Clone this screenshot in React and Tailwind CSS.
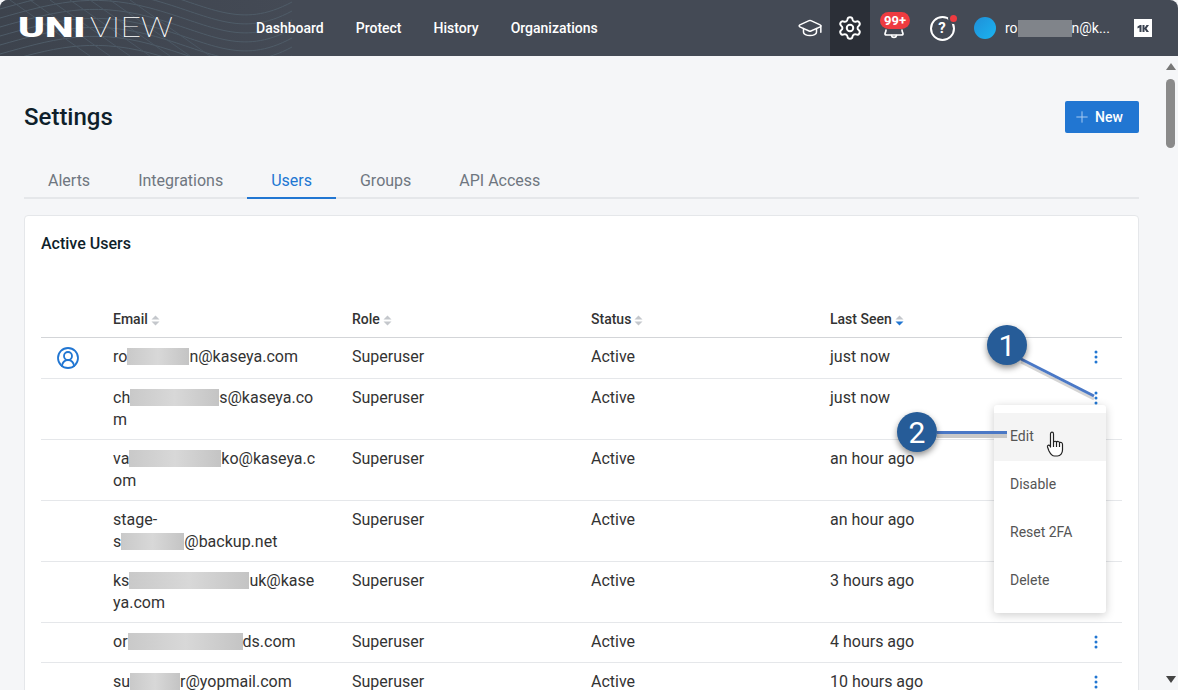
import React from 'react';
import { GraduationCap, Settings, CircleUserRound, Plus } from 'lucide-react';

const Blur = ({ w }) => (
  <span
    className="inline-block h-[17px] align-[-3px] bg-gradient-to-r from-[#c9c9c9] via-[#d8d8d8] to-[#c4c4c4]"
    style={{ width: w }}
  />
);

const users = [
  { lines: [['ro', 62, 'n@kaseya.com']], seen: 'just now', me: true },
  { lines: [['ch', 89, 's@kaseya.co'], ['m']], seen: 'just now' },
  { lines: [['va', 92, 'ko@kaseya.c'], ['om']], seen: 'an hour ago' },
  { lines: [['stage-'], ['s', 63, '@backup.net']], seen: 'an hour ago' },
  { lines: [['ks', 120, 'uk@kase'], ['ya.com']], seen: '3 hours ago' },
  { lines: [['or', 115, 'ds.com']], seen: '4 hours ago' },
  { lines: [['su', 50, 'r@yopmail.com']], seen: '10 hours ago' },
];

const SortIcon = ({ active }) => (
  <svg width="9" height="11" viewBox="0 0 9 11" className="ml-[3px] inline-block">
    <path d="M4.5 0.5 L8.5 4.5 H0.5 Z" fill="#c4c7cc" />
    <path d="M4.5 10.5 L8.5 6.5 H0.5 Z" fill={active ? '#2176d2' : '#c4c7cc'} />
  </svg>
);

const Kebab = () => (
  <svg width="4" height="14" viewBox="0 0 4 14">
    <circle cx="2" cy="2" r="1.5" fill="#2176d2" />
    <circle cx="2" cy="7" r="1.5" fill="#2176d2" />
    <circle cx="2" cy="12" r="1.5" fill="#2176d2" />
  </svg>
);

const HeaderWaves = () => (
  <svg className="absolute left-0 top-0 h-14 w-[292px]" viewBox="0 0 292 56" fill="none" stroke="#4f5c68" strokeWidth="1">
    {[-32, -23, -14, -5, 4, 13, 22, 31].map((d) => (
      <path key={d} d={`M0 ${32 + d} C 50 ${18 + d}, 90 ${6 + d}, 150 ${22 + d} S 240 ${62 + d}, 292 ${34 + d}`} />
    ))}
    {[-40, -30, -20, -10, 0, 10, 20].map((d) => (
      <path key={d} d={`M${90 + d * 2} 0 L${170 + d * 2} 56`} stroke="#4b5763" />
    ))}
  </svg>
);

const BellBottom = () => (
  <svg width="22" height="10" viewBox="0 0 22 10" fill="none" stroke="#fff" strokeWidth="1.7" strokeLinecap="round">
    <path d="M3 1 C3 3 2 3.5 2 5 C2 6 3 6 4 6 H18 C19 6 20 6 20 5 C20 3.5 19 3 19 1" />
    <path d="M8.5 6.5 C9 9 13 9 13.5 6.5" />
  </svg>
);

const KaseyaMark = () => (
  <svg width="18" height="18" viewBox="0 0 18 18" className="bg-white">
    <path d="M3.5 7.5 L6 6 H7.5 V13 H5.5 V8.5 L3.5 9.5 Z" fill="#3a4250" />
    <path d="M8.5 6 H10.5 V9 L12.5 6 H15 L12.5 9.5 L15 13 H12.5 L10.5 10 V13 H8.5 Z" fill="#3a4250" />
  </svg>
);

function App() {
  return (
    <div className="relative flex h-[690px] w-[1178px] flex-col overflow-hidden bg-[#f5f6f8] font-['Roboto',sans-serif] text-[#333]">
      <header className="relative flex h-14 shrink-0 items-center overflow-hidden rounded-t-lg bg-[#444a55] text-white">
        <div className="absolute left-0 top-0 h-14 w-[292px] bg-gradient-to-r from-[#3d434d] to-[#444a55]" />
        <HeaderWaves />
        <div className="relative flex w-[240px] items-center pl-[18px] text-[27px] leading-none">
          <span className="inline-block w-[72px] origin-left scale-x-[1.5] font-black">UNI</span>
          <span className="inline-block origin-left scale-x-[1.32] font-thin">VIEW</span>
        </div>
        <nav className="relative flex pb-px text-sm font-medium">
          <a className="px-4">Dashboard</a>
          <a className="px-4">Protect</a>
          <a className="px-4">History</a>
          <a className="px-4">Organizations</a>
        </nav>
        <div className="relative ml-auto flex h-full items-center">
          <div className="flex h-full w-[40px] items-center justify-center">
            <GraduationCap size={26} strokeWidth={1.4} />
          </div>
          <div className="flex h-full w-[40px] items-center justify-center bg-[#2b2f37]">
            <Settings size={26} strokeWidth={1.8} />
          </div>
          <div className="relative flex h-full w-[48px] items-start justify-center pt-[29px]">
            <BellBottom />
            <span className="absolute left-[10px] top-[12px] rounded-full bg-[#ee3b40] px-[4px] text-[13px] font-bold leading-[17px]">99+</span>
          </div>
          <div className="relative flex h-full w-[48px] items-center justify-center">
            <span className="flex h-[25px] w-[25px] items-center justify-center rounded-full border-2 border-white text-[15px] font-bold leading-none">?</span>
            <span className="absolute left-[30px] top-[13px] h-[11px] w-[11px] rounded-full border-2 border-[#444a55] bg-[#ee3b40]" />
          </div>
          <div className="ml-[8px] h-[22px] w-[22px] rounded-full bg-gradient-to-br from-[#1f8fd8] to-[#1ab4f0]" />
          <div className="ml-[9px] flex w-[105px] items-center text-sm">
            <span>ro</span>
            <span className="h-[17px] w-[56px] bg-[#80848a]" />
            <span>n@k...</span>
          </div>
          <div className="ml-[24px] mr-[26px]">
            <KaseyaMark />
          </div>
        </div>
      </header>

      <div className="flex min-h-0 flex-1">
        <main className="min-w-0 flex-1 px-6 pt-[45px]">
          <div className="flex items-center justify-between">
            <h1 className="text-2xl font-medium leading-8 text-[#0f1f2b]">Settings</h1>
            <button className="flex h-8 w-[74px] items-center gap-1 rounded-[2px] bg-[#2176d2] pb-px pl-2 text-sm font-medium text-white">
              <Plus size={18} strokeWidth={1.3} className="text-[#a9cdf2]" />
              New
            </button>
          </div>

          <div className="mt-[30px] flex h-[36px] border-b-2 border-[#e5e7ea] text-base text-[#6f7680]">
            <a className="px-6 pt-[6px]">Alerts</a>
            <a className="px-6 pt-[6px]">Integrations</a>
            <a className="-mb-[2px] border-b-2 border-[#2176d2] px-6 pt-[6px] text-[#2176d2]">Users</a>
            <a className="px-6 pt-[6px]">Groups</a>
            <a className="px-6 pt-[6px]">API Access</a>
          </div>

          <section className="mt-4 rounded-t border border-[#e5e7ea] bg-white px-4 pt-4">
            <h2 className="text-base font-medium leading-6 text-[#0f1f2b]">Active Users</h2>

            <div className="mt-[33px] grid h-[49px] grid-cols-[60px_239px_239px_239px_239px_65px] items-end border-b border-[#d3d5d8] pb-[8px] text-sm font-medium leading-5">
              <div />
              <div className="px-3">Email<SortIcon /></div>
              <div className="px-3">Role<SortIcon /></div>
              <div className="px-3">Status<SortIcon /></div>
              <div className="px-3">Last Seen<SortIcon active /></div>
              <div />
            </div>

            {users.map((u, i) => (
              <div
                key={i}
                className={
                  i === 0
                    ? 'grid min-h-[39px] grid-cols-[60px_239px_239px_239px_239px_65px] border-b border-[#e5e7ea] py-2 text-base leading-[22px]'
                    : 'grid min-h-10 grid-cols-[60px_239px_239px_239px_239px_65px] border-b border-[#e5e7ea] py-2 text-base leading-[22px]'
                }
              >
                <div className="flex justify-center pr-[6px]">
                  {u.me && <CircleUserRound size={24} strokeWidth={1.8} className="text-[#2176d2]" />}
                </div>
                <div className="px-3">
                  {u.lines.map((l, j) => (
                    <div key={j} className="whitespace-nowrap">
                      {l[0]}
                      {l[1] && <Blur w={l[1]} />}
                      {l[2]}
                    </div>
                  ))}
                </div>
                <div className="px-3">Superuser</div>
                <div className="px-3">Active</div>
                <div className="px-3">{u.seen}</div>
                <div className="flex justify-center pl-[12px] pt-[4px]">
                  <Kebab />
                </div>
              </div>
            ))}
          </section>
        </main>

        <aside className="flex w-[15px] shrink-0 flex-col items-center bg-[#f5f6f8] pt-[7px]">
          <svg width="10" height="7" viewBox="0 0 10 7"><path d="M5 0 L10 7 H0 Z" fill="#777" /></svg>
          <div className="mt-[9px] h-[69px] w-[9px] rounded-full bg-[#8a8a8a]" />
          <svg className="mt-auto mb-[7px]" width="10" height="7" viewBox="0 0 10 7"><path d="M5 7 L10 0 H0 Z" fill="#444" /></svg>
        </aside>
      </div>

      {/* row menu */}
      <div className="absolute left-[994px] top-[405px] w-[112px] rounded-[3px] bg-white py-2 text-sm text-[#555] shadow-[0_2px_10px_rgba(0,0,0,0.2)]">
        <div className="flex h-12 items-center bg-[#f4f4f4] px-4 pb-[2px]">Edit</div>
        <div className="flex h-12 items-center px-4 pb-[2px]">Disable</div>
        <div className="flex h-12 items-center px-4 pb-[2px]">Reset 2FA</div>
        <div className="flex h-12 items-center px-4 pb-[2px]">Delete</div>
      </div>

      {/* hand cursor */}
      <svg className="absolute left-[1046px] top-[431px]" width="19" height="26" viewBox="0 0 18 26" fill="#fff" stroke="#222" strokeWidth="1.2" strokeLinejoin="round">
        <path d="M4 3 C4 0.5 7 0.5 7 3 V11 C8 10 9.5 10 10 11 C11 10 12.5 10.5 13 11.5 C14 11 16 11.5 16 13.5 V19 C16 22 14 25 11 25 H8 C5 25 4 23 2.5 20 L1 16 C0.5 14.5 2.5 13.5 3.5 15 L4 16 Z" />
        <path d="M7 11 V16 M10 11 V16 M13 11.5 V16" fill="none" />
      </svg>

      {/* callouts */}
      <svg className="absolute left-[930px] top-[350px]" width="175" height="95" viewBox="0 0 175 95" fill="none">
        <path d="M91 12 L164 49" stroke="#888" strokeWidth="3" opacity="0.35" />
        <path d="M91 9 L164 46" stroke="#4a78c6" strokeWidth="3" />
        <path d="M7 85.5 H77" stroke="#bbb" strokeWidth="5" opacity="0.8" />
        <path d="M7 82.5 H77" stroke="#4a78c6" strokeWidth="3" />
      </svg>
      <div className="absolute left-[987px] top-[325px] flex h-10 w-10 items-center justify-center rounded-full bg-[#265c98] text-[30px] text-white shadow-[0_3px_6px_rgba(0,0,0,0.45)]">1</div>
      <div className="absolute left-[897px] top-[412px] flex h-10 w-10 items-center justify-center rounded-full bg-[#265c98] text-[30px] text-white shadow-[0_3px_6px_rgba(0,0,0,0.45)]">2</div>
    </div>
  );
}

export default App;
